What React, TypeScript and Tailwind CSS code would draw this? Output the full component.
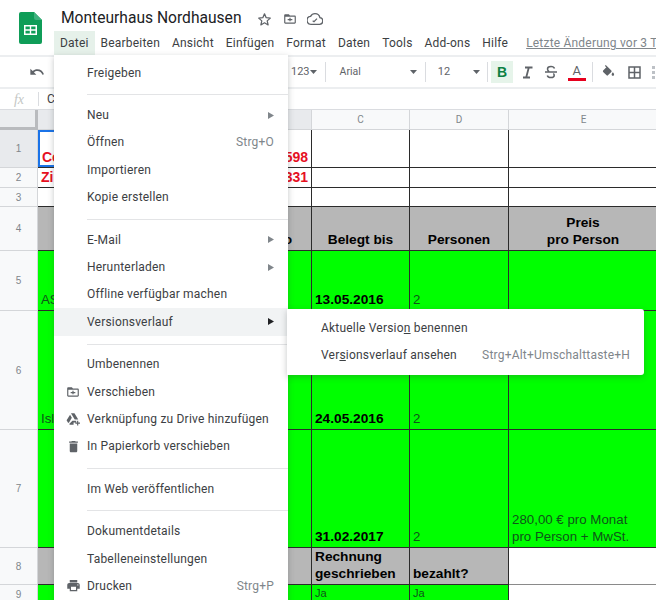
import { ReactNode } from 'react';

const MENU_BAR = ['Bearbeiten', 'Ansicht', 'Einfügen', 'Format', 'Daten', 'Tools', 'Add-ons', 'Hilfe'];
const ROW_HEIGHTS = [38, 20, 19, 44, 60, 119, 118, 37, 20];

const GREEN = 'bg-[#00ff00]';
const GREY = 'bg-[#b7b7b7]';
const BOLD = 'font-bold text-[13.7px] text-black';
const PLAIN = 'text-[13.3px] text-[#0f5519]';
const RED = 'font-bold text-[14px] text-[#e6101f]';
const SMALL = 'text-[11px] text-[#0f5519] justify-start';

function Caret() {
  return (
    <svg width="7" height="4" viewBox="0 0 7 4" className="shrink-0">
      <path d="M0 0h7L3.500 4z" fill="#5f6368" />
    </svg>
  );
}

function Arrow({ dark }: { dark?: boolean }) {
  return (
    <svg width="6" height="7" viewBox="0 0 6 7" className="shrink-0">
      <path d="M0 0l6 3.500L0 7z" fill={dark ? '#202124' : '#80868b'} />
    </svg>
  );
}

function FolderIcon({ className }: { className?: string }) {
  return (
    <svg width="14" height="14" viewBox="0 0 24 24" className={className}>
      <path d="M20 6h-8l-2-2H4c-1.100 0-2 .900-2 2v12c0 1.100.900 2 2 2h16c1.100 0 2-.900 2-2V8c0-1.100-.900-2-2-2zm0 12H4V8h16v10zM11 10v2H8v2h3v2h2v-2h3v-2h-3v-2z" fill="#5f6368" />
    </svg>
  );
}

function MenuItem({ label, hint, arrow, icon, active }: { label: string; hint?: string; arrow?: boolean; icon?: ReactNode; active?: boolean }) {
  return (
    <div className={`h-[27.4px] flex items-center pr-[14px] ${active ? 'bg-[#f1f3f4]' : ''}`}>
      <div className="w-[33px] flex justify-center pl-[5px] shrink-0">{icon}</div>
      <span className="flex-1">{label}</span>
      {hint && <span className="text-[#80868b]">{hint}</span>}
      {arrow && <Arrow dark={active} />}
    </div>
  );
}

function Divider() {
  return (
    <div className="h-[15px] pt-[8px] pl-[33px]">
      <div className="h-px bg-[#e3e4e6]" />
    </div>
  );
}

function Cell({ className, children }: { className?: string; children?: ReactNode }) {
  return (
    <div className={`relative flex flex-col justify-end border-r border-b border-[#2b2b2b] px-[3px] pb-[2px] leading-[16.5px] overflow-hidden ${className ?? ''}`}>
      {children}
    </div>
  );
}

function RowHead({ n, active }: { n: number; active?: boolean }) {
  return (
    <div className={`border-r border-b border-[#d4d6d9] flex items-center justify-center text-[10px] text-[#80868b] ${active ? 'bg-[#e8eaed]' : 'bg-[#f8f9fa]'}`}>
      {n}
    </div>
  );
}

export default function App() {
  return (
    <div className="relative w-[656px] h-[600px] overflow-hidden bg-white text-[#3c4043] font-['Roboto','Liberation_Sans',sans-serif]">
      {/* Title and menu bar */}
      <div className="h-[55px] flex">
        <div className="w-[54px] pl-[19px] pt-[12px] shrink-0">
          <svg width="23" height="32" viewBox="0 0 23 32">
            <path d="M2 0h13l8 8v22a2 2 0 0 1-2 2H2a2 2 0 0 1-2-2V2a2 2 0 0 1 2-2z" fill="#0f9d58" />
            <path d="M15 0l8 8h-6a2 2 0 0 1-2-2z" fill="#3fb27f" />
            <path d="M5 13h13v10H5z M6.500 14.500v2.800h4.300v-2.800z M12.200 14.500v2.800h4.300v-2.800z M6.500 18.700v2.800h4.300v-2.800z M12.200 18.700v2.800h4.300v-2.800z" fill="#fff" fillRule="evenodd" />
          </svg>
        </div>
        <div className="flex-1 min-w-0">
          <div className="h-[31px] pt-[7px] pl-[7px] flex items-center text-[#202124]">
            <span className="text-[15.6px] w-[196px] whitespace-nowrap">Monteurhaus Nordhausen</span>
            <svg width="15" height="15" viewBox="0 0 24 24">
              <path d="M12 3l2.700 6.100 6.600.700-5 4.400 1.500 6.500L12 17.300l-5.800 3.400 1.500-6.500-5-4.400 6.600-.700z" fill="none" stroke="#5f6368" strokeWidth="2" strokeLinejoin="round" />
            </svg>
            <FolderIcon className="ml-[11px]" />
            <svg width="16" height="16" viewBox="0 0 24 24" className="ml-[10px]">
              <path d="M19.350 10.040A7.490 7.490 0 0 0 12 4a7.500 7.500 0 0 0-6.650 4.040A6 6 0 0 0 6 20h13a5 5 0 0 0 .350-9.960z" fill="none" stroke="#5f6368" strokeWidth="2" />
              <path d="M8.500 14.500l2 1.500 4.500-4.500" fill="none" stroke="#5f6368" strokeWidth="1.800" />
            </svg>
          </div>
          <div className="h-[24px] flex items-center text-[12px] tracking-[0.2px] whitespace-nowrap">
            <span className="h-full px-[6px] flex items-center bg-[#e6f1ea]">Datei</span>
            {MENU_BAR.map((m) => (
              <span key={m} className="px-[6px] first-of-type:ml-[1px]">{m}</span>
            ))}
            <span className="ml-[12px] text-[#80868b] underline">Letzte Änderung vor 3 Tagen</span>
          </div>
        </div>
      </div>

      {/* Toolbar */}
      <div className="h-[34px] border-y-2 border-[#eceef0] flex items-center text-[10.5px] text-[#5f6368] whitespace-nowrap">
        <svg width="16" height="16" viewBox="0 0 24 24" className="ml-[29px]">
          <path d="M12.500 8c-2.650 0-5.050.990-6.900 2.600L2 7v9h9l-3.620-3.620c1.390-1.160 3.160-1.880 5.120-1.880 3.540 0 6.550 2.310 7.600 5.500l2.370-.780C21.080 11.030 17.150 8 12.500 8z" fill="#5f6368" />
        </svg>
        <span className="ml-[246px] text-[11px]">123</span>
        <Caret />
        <div className="ml-[8px] h-[20px] w-px bg-[#dadce0]" />
        <span className="ml-[14px]">Arial</span>
        <span className="ml-[49px]"><Caret /></span>
        <div className="ml-[8px] h-[20px] w-px bg-[#dadce0]" />
        <span className="ml-[12px] text-[11px]">12</span>
        <span className="ml-[23px]"><Caret /></span>
        <div className="ml-[7px] h-[20px] w-px bg-[#dadce0]" />
        <div className="ml-[3px] w-[22px] h-[22px] bg-[#e6f4ea] flex items-center justify-center text-[14px] font-bold text-[#0d8043] font-['Liberation_Sans',sans-serif]">B</div>
        <svg width="13" height="13" viewBox="0 0 13 13" className="ml-[8px]">
          <path d="M4 1.500h7.500 M2 11.500h7 M7.800 1.500L5.200 11.500" fill="none" stroke="#5f6368" strokeWidth="1.800" />
        </svg>
        <svg width="14" height="14" viewBox="0 0 14 14" className="ml-[10px]">
          <path d="M10.500 3.500C10 2 8.800 1.500 7 1.500 5 1.500 3.500 2.500 3.500 4c0 1 .500 1.800 1.500 2.500 M1 7h12 M9.300 8.500c.600.500.900 1 .900 1.700 0 1.500-1.400 2.400-3.200 2.400-1.800 0-3.200-.700-3.700-2.200" fill="none" stroke="#5f6368" strokeWidth="1.500" />
        </svg>
        <div className="ml-[9px] w-[19px] flex flex-col items-center">
          <span className="text-[13px] leading-[15px]">A</span>
          <div className="w-[18px] h-[3px] bg-[#e6001e]" />
        </div>
        <div className="ml-[6px] h-[20px] w-px bg-[#dadce0]" />
        <svg width="15" height="15" viewBox="0 0 24 24" className="ml-[8px]">
          <path d="M16.560 8.940L7.620 0 6.210 1.410l2.380 2.380-5.150 5.150c-.590.590-.590 1.540 0 2.120l5.500 5.500c.290.290.680.440 1.060.440s.770-.150 1.060-.440l5.500-5.500c.590-.580.590-1.530 0-2.120zM19 11.500s-2 2.170-2 3.500c0 1.100.900 2 2 2s2-.900 2-2c0-1.330-2-3.500-2-3.500z" fill="#5f6368" />
        </svg>
        <svg width="13" height="13" viewBox="0 0 13 13" className="ml-[12px] shrink-0">
          <path d="M1 1h11v11H1z M6.500 1v11 M1 6.500h11" fill="none" stroke="#5f6368" strokeWidth="1.500" />
        </svg>
        <svg width="3" height="13" viewBox="0 0 3 13" className="ml-[11px] shrink-0">
          <path d="M0 0h3v3H0z M0 5h3v3H0z M0 10h3v3H0z" fill="#bdc1c6" />
        </svg>
      </div>

      {/* Formula bar */}
      <div className="h-[20px] flex items-center bg-white">
        <span className="w-[38px] text-center text-[14px] italic text-[#c4c7c5] font-['Liberation_Serif',serif]">fx</span>
        <div className="h-[14px] w-px bg-[#dadce0]" />
        <span className="ml-[8px] text-[12px]">C</span>
      </div>

      {/* Column headers */}
      <div className="h-[21px] grid grid-cols-[38px_274px_98px_99px_149px] text-[10px] text-[#80868b] border-t border-[#dadce0]">
        <div className="bg-[#eceef0] border-r-[3px] border-b-[3px] border-[#b9bbbe]" />
        <div className="bg-[#e8eaed] border-r border-b border-[#d4d6d9]" />
        <div className="bg-[#f8f9fa] border-r border-b border-[#d4d6d9] flex items-center justify-center">C</div>
        <div className="bg-[#f8f9fa] border-r border-b border-[#d4d6d9] flex items-center justify-center">D</div>
        <div className="bg-[#f8f9fa] border-b border-[#d4d6d9] flex items-center justify-center">E</div>
      </div>

      {/* Sheet */}
      <div
        className="grid grid-cols-[38px_274px_98px_99px_149px] font-['Liberation_Sans',sans-serif]"
        style={{ gridTemplateRows: ROW_HEIGHTS.map((h) => `${h}px`).join(' ') }}
      >
        <RowHead n={1} active />
        <Cell className={RED}>
          <div className="absolute left-0 top-0 bottom-0 w-[100px] border-2 border-[#1a73e8]" />
          <div className="flex justify-between"><span className="pl-[1px]">Co</span><span>598</span></div>
        </Cell>
        <Cell /><Cell /><Cell />

        <RowHead n={2} />
        <Cell className={RED}>
          <div className="flex justify-between"><span>Zi</span><span>331</span></div>
        </Cell>
        <Cell /><Cell /><Cell />

        <RowHead n={3} />
        <Cell /><Cell /><Cell /><Cell />

        <RowHead n={4} />
        <Cell className={`${GREY} ${BOLD} items-end`}><span className="pr-[16px]">o</span></Cell>
        <Cell className={`${GREY} ${BOLD} text-center`}>Belegt bis</Cell>
        <Cell className={`${GREY} ${BOLD} text-center`}>Personen</Cell>
        <Cell className={`${GREY} ${BOLD} text-center`}>Preis<br />pro Person</Cell>

        <RowHead n={5} />
        <Cell className={`${GREEN} ${PLAIN}`}>AS</Cell>
        <Cell className={`${GREEN} ${BOLD}`}>13.05.2016</Cell>
        <Cell className={`${GREEN} ${PLAIN}`}>2</Cell>
        <Cell className={GREEN} />

        <RowHead n={6} />
        <Cell className={`${GREEN} ${PLAIN}`}>Isl</Cell>
        <Cell className={`${GREEN} ${BOLD}`}>24.05.2016</Cell>
        <Cell className={`${GREEN} ${PLAIN}`}>2</Cell>
        <Cell className={GREEN} />

        <RowHead n={7} />
        <Cell className={GREEN} />
        <Cell className={`${GREEN} ${BOLD}`}>31.02.2017</Cell>
        <Cell className={`${GREEN} ${PLAIN}`}>2</Cell>
        <Cell className={`${GREEN} ${PLAIN}`}>280,00 € pro Monat<br />pro Person + MwSt.</Cell>

        <RowHead n={8} />
        <Cell className={GREY} />
        <Cell className={`${GREY} ${BOLD}`}>Rechnung<br />geschrieben</Cell>
        <Cell className={`${GREY} ${BOLD}`}>bezahlt?</Cell>
        <Cell className="border-[#8a8a8a]" />

        <RowHead n={9} />
        <Cell className={GREEN} />
        <div className={`${GREEN} ${SMALL} border-r border-[#2b2b2b] px-[3px] leading-[16px]`}>Ja</div>
        <div className={`${GREEN} ${SMALL} border-r border-[#2b2b2b] px-[3px] leading-[16px]`}>Ja</div>
        <Cell />
      </div>

      {/* Datei menu */}
      <div className="absolute left-[54px] top-[55px] w-[234px] h-[560px] pt-[4px] bg-white shadow-[0_2px_6px_rgba(60,64,67,0.3)] text-[12px] tracking-[0.2px] whitespace-nowrap">
        <MenuItem label="Freigeben" />
        <Divider />
        <MenuItem label="Neu" arrow />
        <MenuItem label="Öffnen" hint="Strg+O" />
        <MenuItem label="Importieren" />
        <MenuItem label="Kopie erstellen" />
        <Divider />
        <MenuItem label="E-Mail" arrow />
        <MenuItem label="Herunterladen" arrow />
        <MenuItem label="Offline verfügbar machen" />
        <MenuItem label="Versionsverlauf" arrow active />
        <Divider />
        <MenuItem label="Umbenennen" />
        <MenuItem label="Verschieben" icon={<FolderIcon />} />
        <MenuItem
          label="Verknüpfung zu Drive hinzufügen"
          icon={
            <svg width="14" height="14" viewBox="0 0 24 24">
              <path d="M8.500 2h6l6.500 11h-6z M7 4.500l3 5.300L5 18.500H3.500L1 14z M11 15h6.500v3H13v4H6.500l-1-1.500z M19 15h2v3h3v2h-3v3h-2v-3h-3v-2h3z" fill="#5f6368" />
            </svg>
          }
        />
        <MenuItem
          label="In Papierkorb verschieben"
          icon={
            <svg width="15" height="15" viewBox="0 0 24 24">
              <path d="M6 19c0 1.100.900 2 2 2h8c1.100 0 2-.900 2-2V7H6v12zM19 4h-3.500l-1-1h-5l-1 1H5v2h14V4z" fill="#5f6368" />
            </svg>
          }
        />
        <Divider />
        <MenuItem label="Im Web veröffentlichen" />
        <Divider />
        <MenuItem label="Dokumentdetails" />
        <MenuItem label="Tabelleneinstellungen" />
        <MenuItem
          label="Drucken"
          hint="Strg+P"
          icon={
            <svg width="15" height="15" viewBox="0 0 24 24">
              <path d="M19 8H5c-1.660 0-3 1.340-3 3v6h4v4h12v-4h4v-6c0-1.660-1.340-3-3-3zm-3 11H8v-5h8v5zm3-7c-.550 0-1-.450-1-1s.450-1 1-1 1 .450 1 1-.450 1-1 1zm-1-9H6v4h12V3z" fill="#5f6368" />
            </svg>
          }
        />
      </div>

      {/* Versionsverlauf submenu */}
      <div className="absolute left-[287px] top-[309px] w-[357px] h-[66px] py-[5px] bg-white rounded-r-[3px] shadow-[0_2px_6px_rgba(60,64,67,0.3)] text-[12px] tracking-[0.2px] whitespace-nowrap">
        <div className="h-[27.4px] flex items-center pl-[34px] pr-[14px]">
          <span>Aktuelle Versio<u>n</u> benennen</span>
        </div>
        <div className="h-[27.4px] flex items-center justify-between pl-[34px] pr-[14px]">
          <span>Ver<u>s</u>ionsverlauf ansehen</span>
          <span className="text-[#80868b]">Strg+Alt+Umschalttaste+H</span>
        </div>
      </div>
    </div>
  );
}
